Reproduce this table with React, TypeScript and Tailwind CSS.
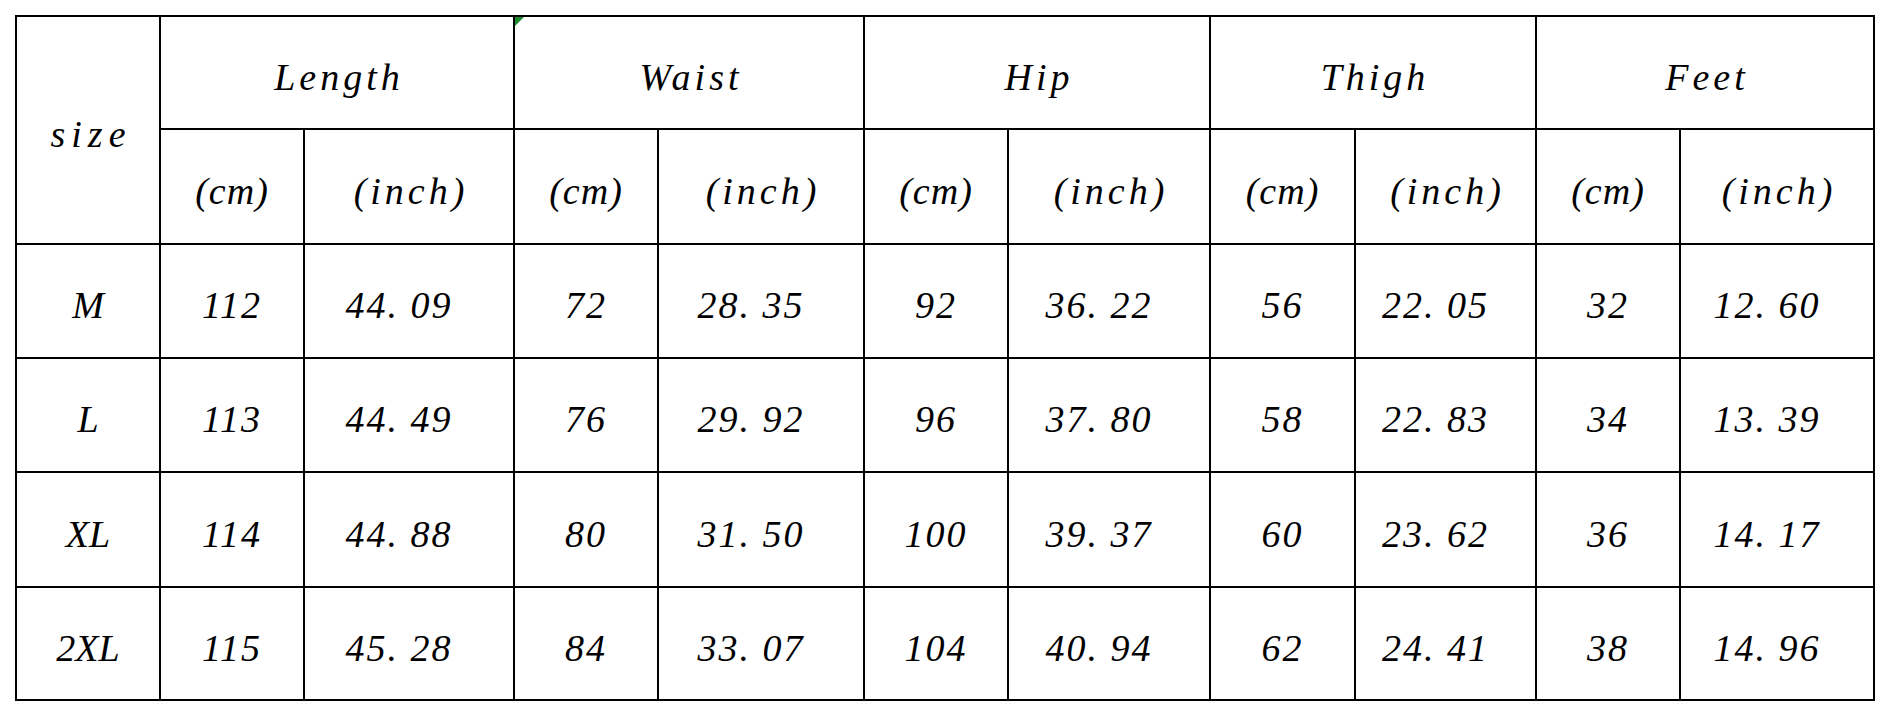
const groups = ['Length', 'Waist', 'Hip', 'Thigh', 'Feet'];

const rows = [
  { size: 'M', values: ['112', '44. 09', '72', '28. 35', '92', '36. 22', '56', '22. 05', '32', '12. 60'] },
  { size: 'L', values: ['113', '44. 49', '76', '29. 92', '96', '37. 80', '58', '22. 83', '34', '13. 39'] },
  { size: 'XL', values: ['114', '44. 88', '80', '31. 50', '100', '39. 37', '60', '23. 62', '36', '14. 17'] },
  { size: '2XL', values: ['115', '45. 28', '84', '33. 07', '104', '40. 94', '62', '24. 41', '38', '14. 96'] },
];

const cell = 'bg-white flex items-center justify-center pt-2';

export default function App() {
  return (
    <div className="min-h-[716px] bg-white p-[15px] font-['Liberation_Serif',serif] italic text-[38px] leading-none text-black">
      <div className="grid w-[1860px] grid-cols-[142px_142px_208px_142px_204px_142px_200px_143px_179px_142px_192px] grid-rows-[111px_113px_112px_112px_113px_111px] gap-[2px] bg-black p-[2px]">
        <div className={`${cell} row-span-2 tracking-[6px] pl-[6px]`}>size</div>
        {groups.map((g, i) => (
          <div key={g} className={`${cell} relative col-span-2 tracking-[4px] pl-[4px]`}>
            {i === 1 && (
              <svg className="absolute left-0 top-0" width="9" height="9" viewBox="0 0 9 9">
                <polygon points="0,0 9,0 0,9" fill="#1e8a2e" />
              </svg>
            )}
            {g}
          </div>
        ))}
        {groups.map((g) => [
          <div key={g + 'cm'} className={`${cell} tracking-[1px]`}>(cm)</div>,
          <div key={g + 'in'} className={`${cell} tracking-[4px] pl-[4px]`}>(inch)</div>,
        ])}
        {rows.map((r) => [
          <div key={r.size} className={cell}>{r.size}</div>,
          ...r.values.map((v, j) => (
            <div key={r.size + j} className={`${cell} tracking-[2px] ${j % 2 === 1 ? 'pr-5' : ''}`}>
              {v}
            </div>
          )),
        ])}
      </div>
    </div>
  );
}
